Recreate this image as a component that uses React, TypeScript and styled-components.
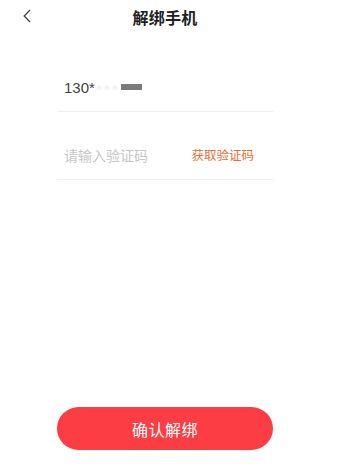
import React from 'react';
import styled, { createGlobalStyle } from 'styled-components';

const GlobalStyle = createGlobalStyle`
  html, body {
    margin: 0;
    padding: 0;
    background: #fff;
    font-family: 'Noto Sans CJK SC', 'Liberation Sans', sans-serif;
  }
`;

const Page = styled.div`
  height: 100vh;
  width: 330px;
  display: flex;
  flex-direction: column;
  box-sizing: border-box;
`;

const Header = styled.div`
  height: 34px;
  display: flex;
  align-items: center;
  justify-content: center;
  position: relative;
`;

const BackButton = styled.button`
  position: absolute;
  left: 20px;
  top: 8px;
  width: 14px;
  height: 16px;
  padding: 0;
  border: none;
  background: none;
  display: flex;
  align-items: center;
  justify-content: center;
`;

const Title = styled.h1`
  margin: 0;
  font-size: 16px;
  font-weight: 700;
  color: #222;
  line-height: 34px;
  letter-spacing: 0.3px;
`;

const Form = styled.div`
  margin: 10px 57px 0;
`;

const Row = styled.div`
  height: 53px;
  border-bottom: 1px solid #eeeeee;
  display: flex;
  align-items: flex-end;
  justify-content: space-between;
  padding: 0 19px 14px 7px;
`;

const Phone = styled.span`
  font-family: 'Liberation Sans', sans-serif;
  font-size: 15px;
  line-height: 20px;
  color: #444;
  display: flex;
  align-items: center;
  margin-bottom: -1px;
`;

const Faint = styled.span`
  color: #ededed;
  font-size: 10px;
  filter: blur(0.6px);
  margin-right: 2px;
`;

const Masked = styled.span`
  display: inline-block;
  width: 21px;
  height: 6px;
  background: #7a7a7a;
  filter: blur(0.5px);
  margin-top: -2px;
`;

const Placeholder = styled.span`
  font-size: 14px;
  line-height: 20px;
  color: #c6c6c6;
`;

const CodeLink = styled.span`
  font-size: 12.5px;
  line-height: 20px;
  color: #e2703c;
`;

const ConfirmButton = styled.button`
  margin: auto 57px 26px;
  height: 43px;
  border: none;
  border-radius: 22px;
  background: #fc3d44;
  color: #fff;
  font-family: 'Noto Sans CJK SC', sans-serif;
  font-size: 16px;
  letter-spacing: 0.5px;
`;

export default function App() {
  return (
    <Page>
      <GlobalStyle />
      <Header>
        <BackButton aria-label="back">
          <svg width="8" height="14" viewBox="0 0 8 14">
            <path d="M7 1 L1.2 7 L7 13" fill="none" stroke="#444" strokeWidth="1.3" />
          </svg>
        </BackButton>
        <Title>解绑手机</Title>
      </Header>
      <Form>
        <Row>
          <Phone>
            130*<Faint>∗∗∗</Faint>
            <Masked />
          </Phone>
        </Row>
        <Row>
          <Placeholder>请输入验证码</Placeholder>
          <CodeLink>获取验证码</CodeLink>
        </Row>
      </Form>
      <ConfirmButton>确认解绑</ConfirmButton>
    </Page>
  );
}
